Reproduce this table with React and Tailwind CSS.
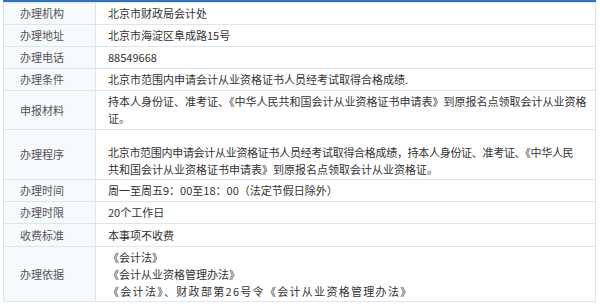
const rows = [
  { label: '办理机构', content: ['北京市财政局会计处'], h: 'h-[22px]' },
  { label: '办理地址', content: ['北京市海淀区阜成路15号'], h: 'h-[22px]' },
  { label: '办理电话', content: ['88549668'], h: 'h-[22px]' },
  { label: '办理条件', content: ['北京市范围内申请会计从业资格证书人员经考试取得合格成绩.'], h: 'h-[22px]' },
  {
    label: '申报材料',
    content: [
      '持本人身份证、准考证、《中华人民共和国会计从业资格证书申请表》到原报名点领取会计从业资格',
      '证。',
    ],
    h: 'h-[39px]',
  },
  {
    label: '办理程序',
    content: [
      '北京市范围内申请会计从业资格证书人员经考试取得合格成绩，持本人身份证、准考证、《中华人民',
      '共和国会计从业资格证书申请表》到原报名点领取会计从业资格证。',
    ],
    h: 'h-[50px]',
    top: true,
  },
  { label: '办理时间', content: ['周一至周五9：00至18：00（法定节假日除外）'], h: 'h-[22px]' },
  { label: '办理时限', content: ['20个工作日'], h: 'h-[22px]' },
  { label: '收费标准', content: ['本事项不收费'], h: 'h-[23px]' },
  {
    label: '办理依据',
    content: ['《会计法》', '《会计从业资格管理办法》', '《会计法》、财政部第26号令《会计从业资格管理办法》'],
    h: 'h-[55px]',
    basis: true,
  },
];

export default function App() {
  return (
    <div className="w-[600px] h-[306px] bg-white pl-[3px] pr-[4px] font-['Microsoft_YaHei','Noto_Sans_CJK_SC',sans-serif] text-[11px] text-[#333]">
      <div className="h-[2px] bg-[#2f73c0]" />
      <table className="w-full border-collapse">
        <tbody>
          {rows.map((r) => (
            <tr key={r.label} className={r.h}>
              <td className="w-[92px] border border-[#dbe7ee] bg-[#f7fafc] pl-[16px] text-[#555] align-middle">
                {r.label}
              </td>
              <td className="border border-[#dbe7ee] pl-[12px] pr-[4px] align-middle leading-[17px] whitespace-nowrap">
                {r.top && <div className="h-[12px]" />}
                {r.content.map((c, i) => (
                  <div
                    key={i}
                    className={
                      r.basis && i === 2 ? 'tracking-[1.3px]' : r.top && i === 0 ? 'tracking-[-0.3px]' : ''
                    }
                  >
                    {c}
                  </div>
                ))}
              </td>
            </tr>
          ))}
        </tbody>
      </table>
    </div>
  );
}
